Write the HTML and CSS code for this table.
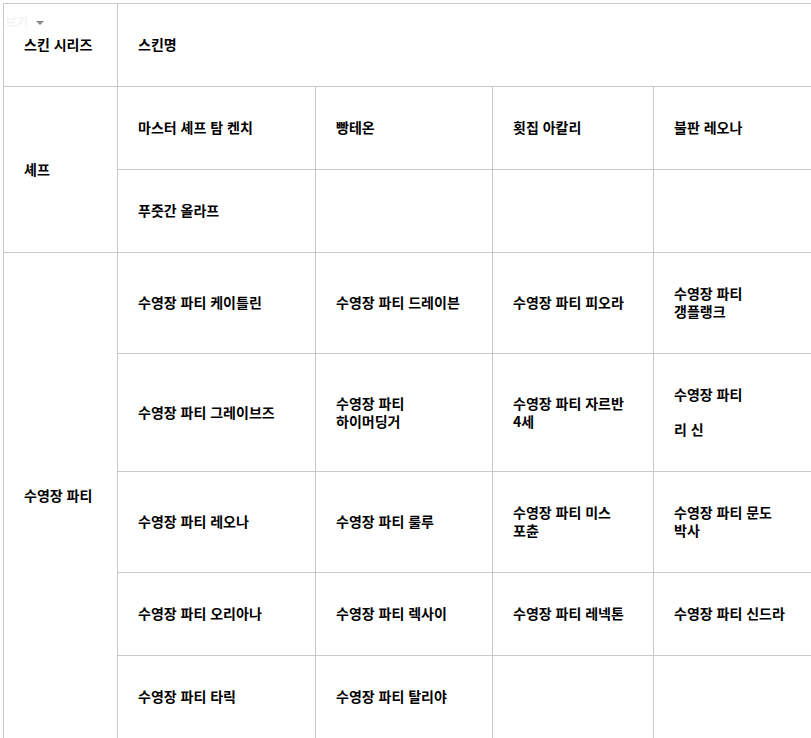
FILE: index.html
```html
<!DOCTYPE html>
<html lang="ko">
<head>
<meta charset="utf-8">
<link rel="stylesheet" href="styles.css">
</head>
<body>
<div class="page">
  <div class="view-toggle"><span class="view-label">보기</span><span class="caret"></span></div>
  <table class="skins">
    <colgroup>
      <col class="c-series">
      <col class="c-a">
      <col class="c-b">
      <col class="c-c">
      <col class="c-d">
    </colgroup>
    <tbody>
      <tr>
        <td>스킨 시리즈</td>
        <td colspan="4">스킨명</td>
      </tr>
      <tr>
        <td rowspan="2">셰프</td>
        <td>마스터 셰프 탐 켄치</td>
        <td>빵테온</td>
        <td>횟집 아칼리</td>
        <td>불판 레오나</td>
      </tr>
      <tr>
        <td>푸줏간 올라프</td>
        <td></td>
        <td></td>
        <td></td>
      </tr>
      <tr>
        <td rowspan="5">수영장 파티</td>
        <td>수영장 파티 케이틀린</td>
        <td>수영장 파티 드레이븐</td>
        <td>수영장 파티 피오라</td>
        <td>수영장 파티<br>갱플랭크</td>
      </tr>
      <tr>
        <td>수영장 파티 그레이브즈</td>
        <td>수영장 파티<br>하이머딩거</td>
        <td>수영장 파티 자르반<br>4세</td>
        <td>수영장 파티<br><br>리 신</td>
      </tr>
      <tr>
        <td>수영장 파티 레오나</td>
        <td>수영장 파티 룰루</td>
        <td>수영장 파티 미스<br>포츈</td>
        <td>수영장 파티 문도<br>박사</td>
      </tr>
      <tr>
        <td>수영장 파티 오리아나</td>
        <td>수영장 파티 렉사이</td>
        <td>수영장 파티 레넥톤</td>
        <td>수영장 파티 신드라</td>
      </tr>
      <tr>
        <td>수영장 파티 타릭</td>
        <td>수영장 파티 탈리야</td>
        <td></td>
        <td></td>
      </tr>
    </tbody>
  </table>
</div>
</body>
</html>
```

FILE: styles.css
```css
html, body {
  margin: 0;
  padding: 0;
  background: #ffffff;
}

.page {
  position: relative;
  padding: 3px 0 0 3px;
}

.view-toggle {
  position: absolute;
  left: 5px;
  top: 15px;
  display: flex;
  align-items: center;
  gap: 8px;
  font-family: "Noto Sans CJK KR", sans-serif;
  font-size: 12.5px;
  font-weight: 700;
  line-height: 14px;
  color: #f4f4f4;
}

.caret {
  width: 0;
  height: 0;
  border-left: 4px solid transparent;
  border-right: 4px solid transparent;
  border-top: 4px solid #8a8a8a;
  margin-top: 1px;
}

.skins {
  border-collapse: collapse;
  table-layout: fixed;
  width: 808px;
  font-family: "Noto Sans CJK KR", "Malgun Gothic", sans-serif;
  font-size: 14px;
  font-weight: 700;
  line-height: 17.8px;
  color: #000000;
}

.c-series { width: 114px; }
.c-a { width: 198px; }
.c-b { width: 177px; }
.c-c { width: 161px; }
.c-d { width: 158px; }

.skins td {
  border: 1px solid #c8c8c8;
  padding: 32.1px 20px;
  vertical-align: middle;
  text-align: left;
}
```
